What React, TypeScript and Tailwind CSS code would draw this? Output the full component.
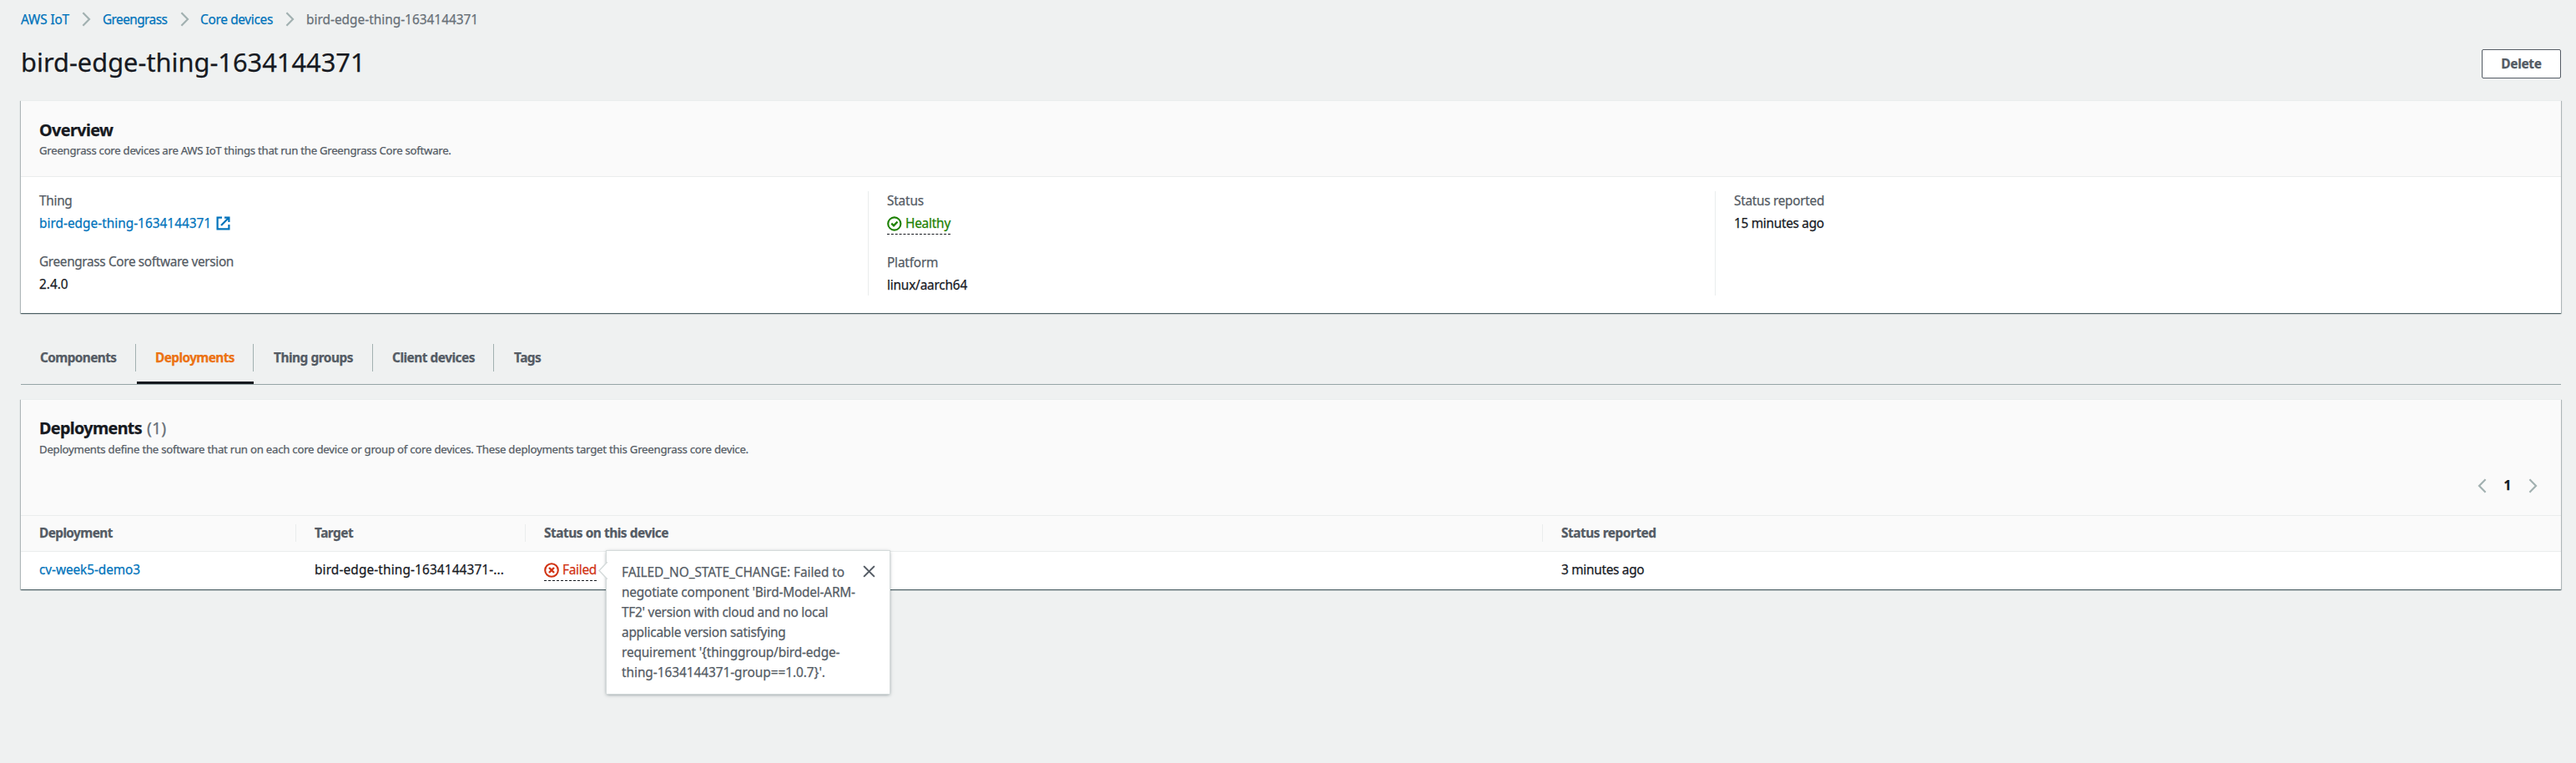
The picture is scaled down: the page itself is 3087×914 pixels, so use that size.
import type { ReactNode } from "react";

const Chevron = ({ className = "" }: { className?: string }) => (
  <svg className={className} width="11" height="18" viewBox="0 0 11 18" fill="none" stroke="#a2b1b1" strokeWidth="2.2">
    <path d="M1.4 1.2 9 9 1.4 16.8" />
  </svg>
);

const ExternalIcon = () => (
  <svg className="ml-[6px] mt-[3px] shrink-0" width="17" height="17" viewBox="0 0 17 17" fill="none" stroke="#0073bb" strokeWidth="2.2">
    <path d="M7 1.6H1.6v13.8h13.8V10M10 1.6h5.4V7M15.2 1.8 6 11" />
  </svg>
);

const CheckIcon = () => (
  <svg className="shrink-0" width="18" height="18" viewBox="0 0 18 18" fill="none" stroke="#1d8102" strokeWidth="2.1">
    <circle cx="8.8" cy="9" r="7.6" />
    <path strokeWidth="2.4" d="m5.3 8.7 2.7 2.6 4.5-4.6" />
  </svg>
);

const FailIcon = () => (
  <svg className="shrink-0" width="18" height="18" viewBox="0 0 18 18" fill="none" stroke="#d13212" strokeWidth="2.1">
    <circle cx="9" cy="9" r="7.8" />
    <path strokeWidth="2.4" d="m6 6 6 6M12 6l-6 6" />
  </svg>
);

const Field = ({ label, labelClass, children }: { label: string; labelClass: string; children: ReactNode }) => (
  <div>
    <div className={`h-[27px] text-[#545b64] ${labelClass}`}>{label}</div>
    <div className="h-[24px]">{children}</div>
  </div>
);

const panel =
  "border-t border-[#eaeded] bg-white shadow-[0_1px_1px_0_rgba(0,28,36,0.5),1px_1px_1px_0_rgba(0,28,36,0.2),-1px_1px_1px_0_rgba(0,28,36,0.2)]";

const tabs = [
  { name: "Components", box: "w-[139px] pl-[23px] pr-[1px]", track: "tracking-[-0.6px]" },
  { name: "Deployments", box: "w-[140px] pl-[22px]", track: "tracking-[-0.59px]", active: true },
  { name: "Thing groups", box: "w-[143px] pl-[24px]", track: "tracking-[-0.47px]" },
  { name: "Client devices", box: "w-[145px] pl-[23px]", track: "tracking-[-0.49px]" },
  { name: "Tags", box: "w-[80px] pl-[24px]", track: "tracking-[-0.5px]", last: true },
];

export default function App() {
  return (
    <div className="h-[914px] w-[3087px] overflow-hidden bg-[#eff1f1] pl-[25px] pr-[18px] pt-[12px] font-['Noto_Sans','Open_Sans',sans-serif] text-[15.4px] leading-[24px] text-[#16191f] [-webkit-text-stroke:0.25px]">
      <nav className="flex h-[42px] items-start whitespace-nowrap text-[#0073bb]">
        <a className="w-[73px] tracking-[-0.15px]">AWS IoT</a>
        <Chevron className="mt-[2px]" />
        <a className="ml-[14px] w-[93px] tracking-[-0.58px]">Greengrass</a>
        <Chevron className="mt-[2px]" />
        <a className="ml-[13px] w-[102px] tracking-[-0.32px]">Core devices</a>
        <Chevron className="mt-[2px]" />
        <span className="ml-[14px] text-[#687078]">bird-edge-thing-1634144371</span>
      </nav>

      <header className="flex h-[66px] items-start justify-between">
        <h1 className="text-[30.8px] leading-[40px]">bird-edge-thing-1634144371</h1>
        <button className="mt-[5px] h-[35px] w-[95px] rounded-[2px] border border-[#545b64] bg-white font-bold tracking-[-0.3px] text-[#545b64]">
          Delete
        </button>
      </header>

      <section className={`h-[255px] ${panel}`}>
        <div className="h-[91px] border-b border-[#eaeded] bg-[#fafafa] pl-[22px] pt-[20px]">
          <h2 className="text-[19.8px] font-bold leading-[30px] tracking-[-0.6px]">Overview</h2>
          <p className="-mt-[1px] text-[13.2px] leading-[20px] tracking-[-0.27px] text-[#545b64]">
            Greengrass core devices are AWS IoT things that run the Greengrass Core software.
          </p>
        </div>
        <div className="grid h-[142px] grid-cols-[1015px_1015px_1fr] pt-[17px]">
          <div className="flex flex-col gap-[22px] pl-[22px]">
            <Field label="Thing" labelClass="tracking-[-0.3px]">
              <a className="flex items-start text-[#0073bb]">
                bird-edge-thing-1634144371
                <ExternalIcon />
              </a>
            </Field>
            <Field label="Greengrass Core software version" labelClass="tracking-[-0.37px]">
              2.4.0
            </Field>
          </div>
          <div className="flex flex-col gap-[23px] border-l border-[#eaeded] pl-[22px]">
            <Field label="Status" labelClass="tracking-[-0.2px]">
              <span className="inline-flex h-[25px] items-center gap-[4px] border-b border-dashed border-[#16191f] tracking-[-0.23px] text-[#1d8102]">
                <CheckIcon />
                Healthy
              </span>
            </Field>
            <Field label="Platform" labelClass="tracking-[-0.2px]">
              <span className="tracking-[-0.2px]">linux/aarch64</span>
            </Field>
          </div>
          <div className="border-l border-[#eaeded] pl-[22px]">
            <Field label="Status reported" labelClass="tracking-[-0.3px]">
              <span className="tracking-[-0.3px]">15 minutes ago</span>
            </Field>
          </div>
        </div>
      </section>

      <div className="mt-[37px] flex h-[49px] items-start border-b border-[#95a5a6] font-bold text-[#545b64]">
        {tabs.map((t) => (
          <div key={t.name} className={`flex h-[48px] items-start whitespace-nowrap ${t.box} ${t.active ? "border-b-[3px] border-[#16191f] text-[#ec7211]" : ""}`}>
            <span className={`flex h-[33px] flex-1 items-center ${t.track} ${t.last ? "" : "border-r border-[#a2b1b1]"}`}>{t.name}</span>
          </div>
        ))}
      </div>

      <section className={`mt-[17px] h-[228px] ${panel}`}>
        <div className="flex h-[139px] justify-between border-b border-[#eaeded] bg-[#fafafa] pl-[22px] pt-[19px]">
          <div>
            <h2 className="text-[19.8px] leading-[30px]">
              <b className="tracking-[-0.67px]">Deployments</b>
              <span className="ml-[6px] text-[#687078]">(1)</span>
            </h2>
            <p className="text-[13.2px] leading-[20px] tracking-[-0.24px] text-[#545b64]">
              Deployments define the software that run on each core device or group of core devices. These deployments target this Greengrass core device.
            </p>
          </div>
          <div className="mr-[28px] mt-[72px] flex h-[24px] items-center font-bold">
            <Chevron className="rotate-180" />
            <span className="w-[50px] text-center">1</span>
            <Chevron />
          </div>
        </div>

        <div className="grid h-[43px] grid-cols-[330px_275px_1219px_1fr] items-start border-b border-[#eaeded] bg-[#fafafa] pt-[10px] font-bold leading-[21px] text-[#545b64]">
          <span className="border-r border-[#eaeded] pl-[22px] tracking-[-0.6px]">Deployment</span>
          <span className="border-r border-[#eaeded] pl-[22px] tracking-[-0.5px]">Target</span>
          <span className="border-r border-[#eaeded] pl-[22px] tracking-[-0.45px]">Status on this device</span>
          <span className="pl-[22px] tracking-[-0.45px]">Status reported</span>
        </div>

        <div className="grid h-[45px] grid-cols-[330px_275px_1219px_1fr] items-start pt-[10px]">
          <a className="pl-[22px] tracking-[-0.09px] text-[#0073bb]">cv-week5-demo3</a>
          <span className="pl-[22px] tracking-[0.12px]">bird-edge-thing-1634144371-...</span>
          <div className="pl-[22px]">
            <div className="relative inline-flex h-[25px] items-center gap-[4px] border-b border-dashed border-[#16191f] tracking-[-0.28px] text-[#d13212]">
              <FailIcon />
              Failed
              <div className="absolute left-[74px] top-[-12px] z-10 flex h-[173px] w-[341px] justify-between border border-[#d5dbdb] bg-white pl-[18px] pr-[17px] pt-[14px] text-[#545b64] shadow-[0_1px_4px_-1px_rgba(0,28,36,0.5)]">
                <svg className="absolute left-[-10px] top-[13px]" width="11" height="21" viewBox="0 0 11 21">
                  <path d="M11 0 1 10.5 11 21" fill="#fff" stroke="#d5dbdb" strokeWidth="1.5" />
                </svg>
                <div className="whitespace-nowrap">
                  <div className="tracking-[-0.05px]">FAILED_NO_STATE_CHANGE: Failed to</div>
                  <div className="tracking-[-0.2px]">negotiate component 'Bird-Model-ARM-</div>
                  <div className="tracking-[-0.25px]">TF2' version with cloud and no local</div>
                  <div className="tracking-[-0.25px]">applicable version satisfying</div>
                  <div className="tracking-[-0.15px]">requirement '{"{"}thinggroup/bird-edge-</div>
                  <div className="tracking-[-0.05px]">thing-1634144371-group==1.0.7{"}"}'.</div>
                </div>
                <svg className="mt-[3px] shrink-0" width="15" height="15" viewBox="0 0 16 16" fill="none" stroke="#545b64" strokeWidth="2.2">
                  <path d="m1.2 1.2 13.6 13.6M14.8 1.2 1.2 14.8" />
                </svg>
              </div>
            </div>
          </div>
          <span className="pl-[22px] tracking-[-0.3px]">3 minutes ago</span>
        </div>
      </section>
    </div>
  );
}
